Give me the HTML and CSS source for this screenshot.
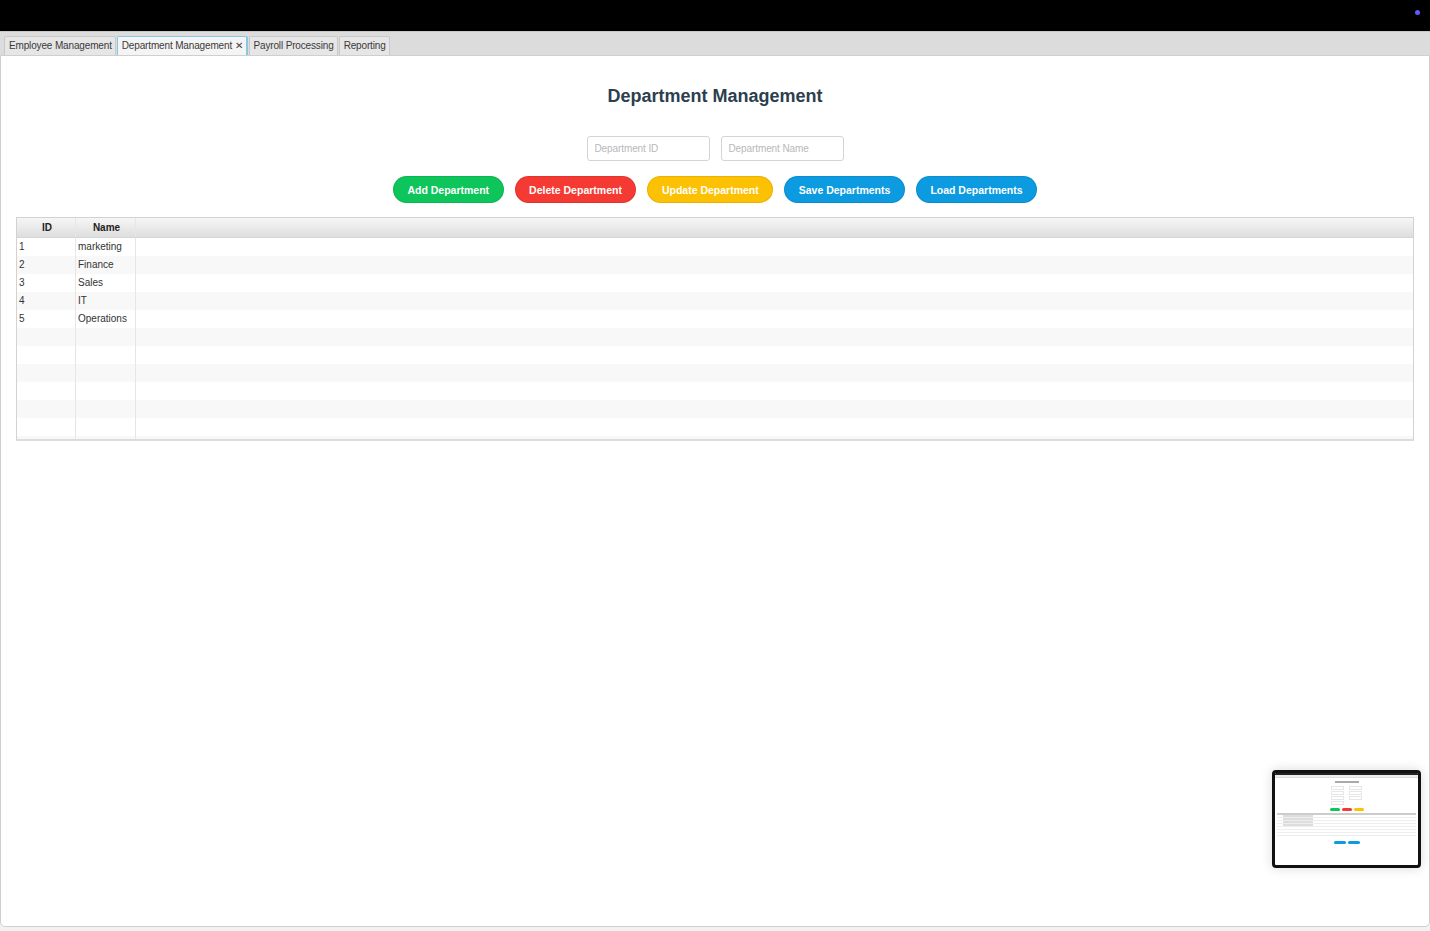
FILE: index.html
```html
<!DOCTYPE html>
<html>
<head>
<meta charset="utf-8">
<link rel="stylesheet" href="styles.css">
</head>
<body>
<div class="topbar"><span class="dot"></span></div>
<div class="tabbar">
  <div class="tab">Employee Management</div>
  <div class="tab active">Department Management <span class="close">✕</span></div>
  <div class="tab">Payroll Processing</div>
  <div class="tab">Reporting</div>
</div>
<div class="panel">
  <h1 class="title">Department Management</h1>
  <div class="inputs">
    <input class="field" placeholder="Department ID">
    <input class="field" placeholder="Department Name">
  </div>
  <div class="buttons">
    <button class="btn green">Add Department</button>
    <button class="btn red">Delete Department</button>
    <button class="btn yellow">Update Department</button>
    <button class="btn blue">Save Departments</button>
    <button class="btn blue">Load Departments</button>
  </div>
  <div class="table">
    <div class="row head"><div class="c1">ID</div><div class="c2">Name</div><div class="c3"></div></div>
    <div class="row"><div class="c1">1</div><div class="c2">marketing</div><div class="c3"></div></div>
    <div class="row"><div class="c1">2</div><div class="c2">Finance</div><div class="c3"></div></div>
    <div class="row"><div class="c1">3</div><div class="c2">Sales</div><div class="c3"></div></div>
    <div class="row"><div class="c1">4</div><div class="c2">IT</div><div class="c3"></div></div>
    <div class="row"><div class="c1">5</div><div class="c2">Operations</div><div class="c3"></div></div>
    <div class="row"><div class="c1"></div><div class="c2"></div><div class="c3"></div></div>
    <div class="row"><div class="c1"></div><div class="c2"></div><div class="c3"></div></div>
    <div class="row"><div class="c1"></div><div class="c2"></div><div class="c3"></div></div>
    <div class="row"><div class="c1"></div><div class="c2"></div><div class="c3"></div></div>
    <div class="row"><div class="c1"></div><div class="c2"></div><div class="c3"></div></div>
    <div class="row"><div class="c1"></div><div class="c2"></div><div class="c3"></div></div>
    <div class="row"><div class="c1"></div><div class="c2"></div><div class="c3"></div></div>
  </div>
  <div class="thumb">
    <div class="t-bar"></div>
    <div class="t-tabs"></div>
    <div class="t-title"></div>
    <div class="t-fields">
      <div class="t-col"><span></span><span></span><span></span><span></span></div>
      <div class="t-col"><span></span><span></span><span></span></div>
    </div>
    <div class="t-btns"><span class="tg"></span><span class="tr"></span><span class="ty"></span></div>
    <div class="t-table">
      <div class="t-head"></div>
      <div class="t-row"><i></i></div><div class="t-row"><i></i></div><div class="t-row"><i></i></div><div class="t-row"><i></i></div><div class="t-row"></div><div class="t-row"></div><div class="t-row"></div>
    </div>
    <div class="t-btns t-low"><span class="tb"></span><span class="tb"></span></div>
  </div>
</div>
</body>
</html>
```
FILE: styles.css
```css
* { box-sizing: border-box; }
html, body { margin: 0; padding: 0; }
body {
  width: 1430px;
  height: 931px;
  overflow: hidden;
  background: #f2f2f2;
  font-family: "Liberation Sans", Arial, sans-serif;
  display: flex;
  flex-direction: column;
}
.topbar {
  height: 31px;
  background: #000;
  position: relative;
  flex: none;
}
.dot {
  position: absolute;
  left: 1415px;
  top: 10px;
  width: 5px;
  height: 5px;
  border-radius: 50%;
  background: #5e5cff;
}
.tabbar {
  height: 24px;
  flex: none;
  background: #dcdcdc;
  border-top: 1px solid #c8c8c8;
  display: flex;
  align-items: flex-end;
  padding-left: 4px;
  gap: 1px;
}
.tab {
  height: 19px;
  line-height: 18px;
  padding: 0 3px 0 4px;
  font-size: 10px;
  letter-spacing: -0.15px;
  color: #3a3a3a;
  background: #e6e6e6;
  border: 1px solid #c9c9c9;
  border-bottom: none;
  border-radius: 2px 2px 0 0;
  white-space: nowrap;
}
.tab.active {
  background: #f4f4f4;
  border: 1px solid #86c8e0;
  border-bottom: none;
  border-right-width: 2px;
}
.close { font-size: 10px; color: #444; }
.panel {
  flex: none;
  height: 872px;
  background: #fff;
  border: 1px solid #cfcfcf;
  border-radius: 0 0 5px 5px;
  padding: 0 15px;
  position: relative;
  display: flex;
  flex-direction: column;
  align-items: stretch;
}
.title {
  margin: 29px 0 0;
  height: 22px;
  line-height: 22px;
  text-align: center;
  font-size: 18px;
  font-weight: bold;
  color: #2c3e50;
}
.inputs {
  margin-top: 29px;
  display: flex;
  justify-content: center;
  gap: 11px;
}
.field {
  width: 123px;
  height: 25px;
  border: 1px solid #d4d4d4;
  border-radius: 3px;
  padding: 0 7px;
  font-family: "Liberation Sans", Arial, sans-serif;
  font-size: 10px;
  letter-spacing: -0.1px;
  color: #333;
  background: #fff;
}
.field::placeholder { color: #b8b8b8; }
.buttons {
  margin-top: 15px;
  display: flex;
  justify-content: center;
  gap: 11px;
}
.btn {
  height: 27px;
  padding: 0 13.5px;
  border-radius: 14px;
  border: 1px solid rgba(0,0,0,0.08);
  font-family: "Liberation Sans", Arial, sans-serif;
  font-size: 10.5px;
  font-weight: bold;
  color: #fff;
}
.green { background: #0dc55b; }
.red { background: #f43a33; }
.yellow { background: #fdc103; }
.blue { background: #0c9ae0; }
.table {
  margin-top: 14px;
  height: 224px;
  overflow: hidden;
  border: 1px solid #d2d2d2;
  border-bottom: 2px solid #dcdcdc;
}
.row {
  display: flex;
  height: 18px;
  font-size: 10px;
  color: #333;
  line-height: 18px;
}
.row:nth-child(odd) { background: #f8f8f8; }
.row:nth-child(even) { background: #fff; }
.row.head {
  height: 20px;
  line-height: 19px;
  background: linear-gradient(#f6f6f6, #dedede);
  border-bottom: 1px solid #d6d6d6;
  font-weight: bold;
  color: #222;
}
.row.head > div { text-align: center; }
.c1 { width: 59px; padding-left: 2px; border-right: 1px solid #e6e6e6; }
.c2 { width: 60px; padding-left: 2px; border-right: 1px solid #e6e6e6; }
.c3 { flex: 1; }
.thumb {
  position: absolute;
  left: 1271px;
  top: 714px;
  width: 149px;
  height: 98px;
  border: 3px solid #111;
  border-radius: 4px;
  background: #fff;
  box-shadow: 0 0 12px rgba(0,0,0,0.15);
  overflow: hidden;
  display: flex;
  flex-direction: column;
  align-items: center;
}
.t-bar { width: 100%; height: 2px; background: #222; flex: none; }
.t-tabs { width: 100%; height: 3px; background: #eee; border-bottom: 1px solid #ddd; flex: none; }
.t-title { width: 24px; height: 2px; background: #aaa; margin-top: 3px; flex: none; }
.t-fields { display: flex; gap: 5px; margin-top: 3px; flex: none; }
.t-col { display: flex; flex-direction: column; gap: 1px; }
.t-col span { display: block; width: 13px; height: 4px; border: 1px solid #e6e6e6; }
.t-btns { display: flex; gap: 2px; margin-top: 3px; flex: none; }
.t-btns span { display: block; width: 10px; height: 3px; border-radius: 2px; }
.tg { background: #0dc55b; }
.tr { background: #f43a33; }
.ty { background: #fdc103; }
.tb { background: #0c9ae0; width: 12px !important; }
.t-table { width: 139px; margin-top: 2px; flex: none; }
.t-head { height: 2px; background: #ccc; }
.t-row { height: 3px; border-bottom: 1px solid #eee; position: relative; }
.t-row i { position: absolute; left: 6px; top: 0; width: 30px; height: 2px; background: #ddd; }
.t-low { margin-top: 5px; }
```
